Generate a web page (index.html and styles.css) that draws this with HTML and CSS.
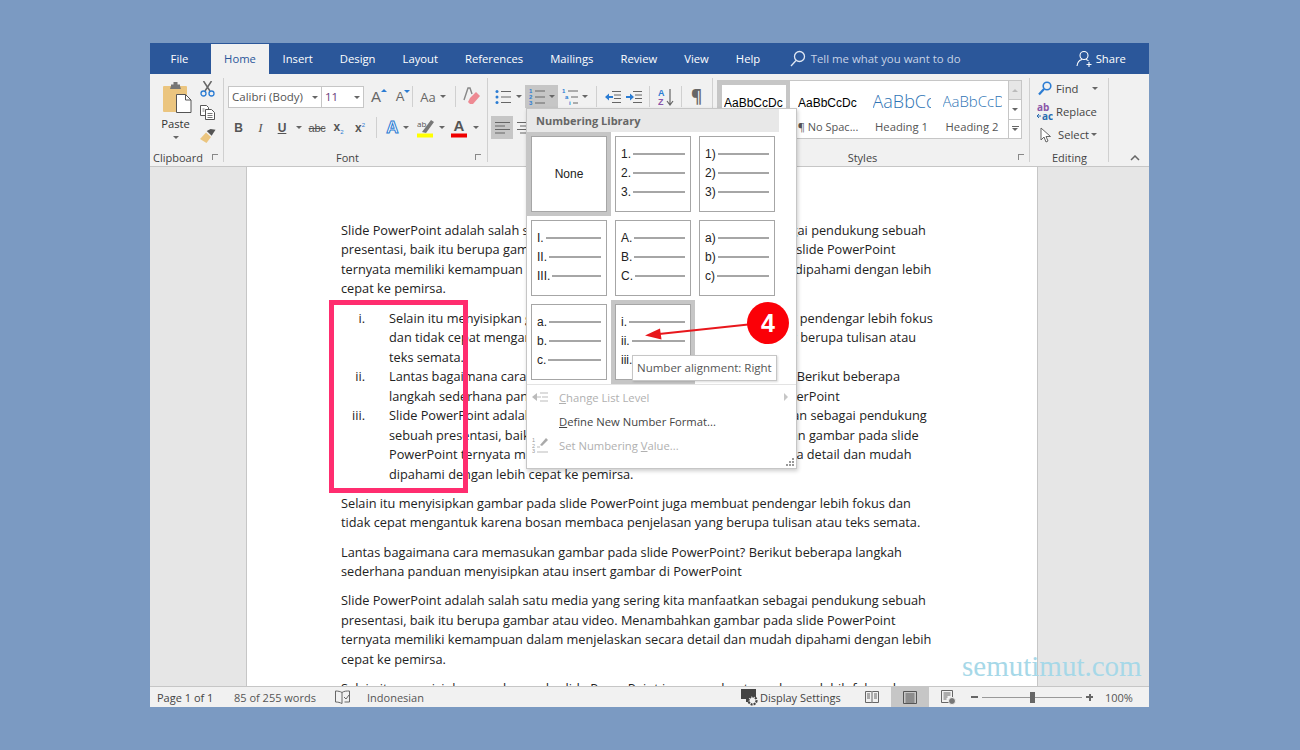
FILE: index.html
```html
<!DOCTYPE html>
<html lang="en">
<head>
  <meta charset="UTF-8">
  <title>Word - Numbering Library</title>
  <link rel="stylesheet" href="styles.css">
</head>
<body>
  <div class="window">

    <!-- Tabs -->
    <div class="tabs">
      <span class="tab tab-file">File</span>
      <span class="tab active">Home</span>
      <span class="tab">Insert</span>
      <span class="tab">Design</span>
      <span class="tab">Layout</span>
      <span class="tab">References</span>
      <span class="tab">Mailings</span>
      <span class="tab">Review</span>
      <span class="tab">View</span>
      <span class="tab">Help</span>
      <div class="tell-me">
        <svg width="16" height="18" viewBox="0 0 16 18" fill="none" stroke="#dfe7f3" stroke-width="1.3"><circle cx="9.5" cy="6.5" r="5"/><path d="M6 10.5 1 16"/></svg>
        <span>Tell me what you want to do</span>
      </div>
      <div class="share">
        <svg width="17" height="18" viewBox="0 0 17 18" fill="none" stroke="#fff" stroke-width="1.1"><circle cx="8" cy="5.5" r="4"/><path d="M1 16c.5-4 3-6 5-6.5M10 9.5c1 .3 2 .8 2.5 1.500M13 12v5M10.500 14.500h5"/></svg>
        <span>Share</span>
      </div>
    </div>

    <!-- Ribbon -->
    <div class="ribbon">

      <div class="group group-clipboard">
        <div class="group-body clip-body">
          <div class="paste">
            <svg width="29" height="31" viewBox="0 0 29 31">
              <rect x="0" y="4" width="24" height="26" rx="1" fill="#ebc57f"/>
              <path d="M8 4V2.500h2.500V0h4v2.500H17V4l1 3H7z" fill="#767676"/>
              <path d="M13.500 12.500h9l5.500 5.500v12.500H13.500z" fill="#fff" stroke="#555" stroke-width="1"/>
              <path d="M22.500 12.500v5.500H28" fill="none" stroke="#555" stroke-width="1"/>
            </svg>
            <span class="paste-label">Paste</span>
            <i class="caret"></i>
          </div>
          <div class="clip-tools">
            <svg width="15" height="16" viewBox="0 0 15 16" fill="none"><path d="M3.500 0 10 10M11.500 0 5 10" stroke="#666" stroke-width="1.500"/><circle cx="3.500" cy="12.500" r="2.500" stroke="#2b7cd3" stroke-width="1.300"/><circle cx="11.500" cy="12.500" r="2.500" stroke="#2b7cd3" stroke-width="1.300"/></svg>
            <svg width="15" height="15" viewBox="0 0 15 15" fill="#fff" stroke="#555"><path d="M.5.500h6l2 2v8H.5z"/><path d="M5.500 4.500h6l3 3v7h-9z"/><path d="M7.500 8.500h5M7.500 10.500h5M7.500 12.500h5M2.500 4h2M2.500 6h2" fill="none" stroke-width=".8"/></svg>
            <svg width="16" height="15" viewBox="0 0 16 15"><path d="M0 11 6 4.500l5 4.500-4.500 6z" fill="#ebc57f"/><path d="M6.500 3.500 10 1l5 0-3 6.500z" fill="#555" transform="rotate(8 10 5)"/></svg>
          </div>
        </div>
        <div class="group-label label-clip"><span>Clipboard</span><i class="launcher"></i></div>
      </div>

      <div class="group group-font">
        <div class="group-body font-body">
          <div class="font-row1">
            <div class="combo">Calibri (Body)<i class="caret"></i></div>
            <div class="combo combo-size">11<i class="caret"></i></div>
            <span class="a-size a-grow">A<i class="tri-up"></i></span>
            <span class="a-size a-shrink">A<i class="tri-down"></i></span>
            <i class="sep sep-left"></i>
            <span class="aa">Aa</span>
            <i class="caret"></i>
            <i class="sep"></i>
            <svg width="17" height="19" viewBox="0 0 17 19"><path d="M1 13 5 1h2l2 6" fill="none" stroke="#888" stroke-width="1.400"/><path d="M7 11 13 5l4 4-7 8H7l-2-2z" fill="#ee8a93"/></svg>
          </div>
          <div class="font-row2">
            <b class="fmt">B</b>
            <i class="fmt fmt-i">I</i>
            <u class="fmt fmt-u">U</u>
            <i class="caret"></i>
            <s class="fmt fmt-abc">abc</s>
            <span class="fmt fmt-x">x<sub>2</sub></span>
            <span class="fmt fmt-x">x<sup>2</sup></span>
            <i class="sep sep-row"></i>
            <span class="text-effect">A</span>
            <i class="caret"></i>
            <svg width="17" height="20" viewBox="0 0 17 20"><path d="M5 14 14 2l3 2-8 11z" fill="#777"/><text x="0" y="9" font-size="8" font-family="Open Sans" fill="#555">ab</text><rect y="15.500" width="16" height="4" fill="#ffff00"/></svg>
            <i class="caret"></i>
            <svg width="16" height="20" viewBox="0 0 16 20"><text x="2.500" y="13" font-size="15" font-weight="700" font-family="Liberation Sans" fill="#555">A</text><rect y="15.500" width="16" height="4" fill="#f00000"/></svg>
            <i class="caret"></i>
          </div>
        </div>
        <div class="group-label label-font"><span>Font</span><i class="launcher"></i></div>
      </div>

      <div class="group group-para">
        <div class="group-body para-body">
          <div class="para-row1">
            <svg width="16" height="16" viewBox="0 0 16 16"><g fill="#2b7cd3"><circle cx="2" cy="2.500" r="1.500"/><circle cx="2" cy="8" r="1.500"/><circle cx="2" cy="13.500" r="1.500"/></g><path d="M6 2.500h10M6 8h10M6 13.500h10" stroke="#666"/></svg>
            <i class="caret"></i>
            <div class="num-btn">
              <svg width="16" height="18" viewBox="0 0 16 18"><g fill="#2b7cd3" font-size="6" font-family="Liberation Sans" font-weight="700"><text y="5">1</text><text y="11">2</text><text y="17">3</text></g><path d="M6 3h10M6 9h10M6 15h10" stroke="#666"/></svg>
              <i class="caret"></i>
            </div>
            <svg width="16" height="18" viewBox="0 0 16 18"><g fill="#2b7cd3" font-size="6" font-family="Liberation Sans" font-weight="700"><text y="5">1</text><text x="3" y="11">a</text><text x="7" y="17">i</text></g><path d="M6 3h10M9 9h7M11 15h5" stroke="#666"/></svg>
            <i class="caret"></i>
            <i class="sep"></i>
            <svg width="16" height="14" viewBox="0 0 16 14"><path d="M7 1.500h9M9 5h7M9 8.500h7M7 12.500h9" stroke="#666"/><path d="M0 7l4-3.500V6h4v2H4v2.500z" fill="#2b7cd3"/></svg>
            <svg width="16" height="14" viewBox="0 0 16 14"><path d="M7 1.500h9M9 5h7M9 8.500h7M7 12.500h9" stroke="#666"/><path d="M8 7 4 3.500V6H0v2h4v2.500z" fill="#2b7cd3"/></svg>
            <i class="sep"></i>
            <svg width="16" height="18" viewBox="0 0 16 18"><text y="8" font-size="9" font-weight="700" font-family="Liberation Sans" fill="#2b7cd3">A</text><text y="17" font-size="9" font-weight="700" font-family="Liberation Sans" fill="#8a55a8">Z</text><path d="M12 1v15M9 13l3 4 3-4" fill="none" stroke="#666" stroke-width="1.200"/></svg>
            <i class="sep"></i>
            <span class="pilcrow">¶</span>
          </div>
          <div class="para-row2">
            <div class="align-btn"><svg width="15" height="12" viewBox="0 0 15 12"><path d="M0 .5h15M0 4h10M0 7.500h15M0 11h10" stroke="#666"/></svg></div>
            <svg width="13" height="12" viewBox="0 0 13 12"><path d="M0 .5h13M3 4h10M0 7.500h13M3 11h10" stroke="#666"/></svg>
          </div>
        </div>
      </div>

      <div class="group group-styles">
        <div class="group-body styles-body">
          <div class="gallery">
            <div class="style-item style-current"><span class="sample">AaBbCcDc</span></div>
            <div class="style-item style-nospace"><span class="sample">AaBbCcDc</span><span class="style-name">¶ No Spac...</span></div>
            <div class="style-item style-h1"><span class="sample">AaBbCc</span><span class="style-name">Heading 1</span></div>
            <div class="style-item style-h2"><span class="sample">AaBbCcD</span><span class="style-name">Heading 2</span></div>
          </div>
          <div class="gallery-scroll">
            <div class="scroll-btn scroll-up"><i class="tri-up tri-grey"></i></div>
            <div class="scroll-btn scroll-down"><i class="caret"></i></div>
            <div class="scroll-btn scroll-more"><i class="more-bar"></i><i class="caret"></i></div>
          </div>
        </div>
        <div class="group-label label-styles"><span>Styles</span><i class="launcher"></i></div>
      </div>

      <div class="group group-edit">
        <div class="group-body edit-body">
          <div class="edit-row">
            <svg width="14" height="15" viewBox="0 0 14 15" fill="none"><circle cx="9" cy="5" r="3.800" stroke="#2b7cd3" stroke-width="1.600"/><path d="M6 8 1 13.500" stroke="#2b7cd3" stroke-width="2.200"/></svg>
            <span>Find</span><i class="caret caret-find"></i>
          </div>
          <div class="edit-row">
            <svg class="replace-icon" width="16" height="18" viewBox="0 0 16 18"><text x="0" y="8" font-size="10" font-weight="700" font-family="Open Sans" fill="#8a55a8">ab</text><text x="5" y="17" font-size="10" font-weight="700" font-family="Open Sans" fill="#2b6cb0">ac</text><path d="M0 13h4M0 13l2-2M0 13l2 2" stroke="#2b6cb0" fill="none"/></svg>
            <span class="replace-text">Replace</span>
          </div>
          <div class="edit-row">
            <svg class="select-icon" width="12" height="16" viewBox="0 0 12 16"><path d="M1 1v12l3-3 2 5 2-1-2-4.500h4.500z" fill="#fff" stroke="#666"/></svg>
            <span>Select</span><i class="caret caret-select"></i>
          </div>
        </div>
        <div class="group-label label-edit"><span>Editing</span></div>
      </div>

      <svg class="collapse" width="10" height="6" viewBox="0 0 10 6" fill="none"><path d="M1 5 5 1l4 4" stroke="#666" stroke-width="1.500"/></svg>
    </div>

    <!-- Document -->
    <div class="doc-area">
      <div class="page">
        <p>Slide PowerPoint adalah salah satu media yang sering kita manfaatkan sebagai pendukung sebuah<br>presentasi, baik itu berupa gambar atau video. Menambahkan gambar pada slide PowerPoint<br>ternyata memiliki kemampuan dalam menjelaskan secara detail dan mudah dipahami dengan lebih<br>cepat ke pemirsa.</p>
        <div class="list">
          <div class="list-item"><span class="marker">i.</span><span>Selain itu menyisipkan gambar pada slide PowerPoint juga membuat pendengar lebih fokus<br>dan tidak cepat mengantuk karena bosan membaca penjelasan yang berupa tulisan atau<br>teks semata.</span></div>
          <div class="list-item"><span class="marker">ii.</span><span>Lantas bagaimana cara memasukan gambar pada slide PowerPoint? Berikut beberapa<br>langkah sederhana panduan menyisipkan atau insert gambar di PowerPoint</span></div>
          <div class="list-item"><span class="marker">iii.</span><span>Slide PowerPoint adalah salah satu media yang sering kita manfaatkan sebagai pendukung<br>sebuah presentasi, baik itu berupa gambar atau video. Menambahkan gambar pada slide<br>PowerPoint ternyata memiliki kemampuan dalam menjelaskan secara detail dan mudah<br>dipahami dengan lebih cepat ke pemirsa.</span></div>
        </div>
        <p>Selain itu menyisipkan gambar pada slide PowerPoint juga membuat pendengar lebih fokus dan<br>tidak cepat mengantuk karena bosan membaca penjelasan yang berupa tulisan atau teks semata.</p>
        <p>Lantas bagaimana cara memasukan gambar pada slide PowerPoint? Berikut beberapa langkah<br>sederhana panduan menyisipkan atau insert gambar di PowerPoint</p>
        <p>Slide PowerPoint adalah salah satu media yang sering kita manfaatkan sebagai pendukung sebuah<br>presentasi, baik itu berupa gambar atau video. Menambahkan gambar pada slide PowerPoint<br>ternyata memiliki kemampuan dalam menjelaskan secara detail dan mudah dipahami dengan lebih<br>cepat ke pemirsa.</p>
        <p>Selain itu menyisipkan gambar pada slide PowerPoint juga membuat pendengar lebih fokus dan</p>
      </div>
    </div>

    <!-- Status bar -->
    <div class="status">
      <span class="st-page">Page 1 of 1</span>
      <span class="st-words">85 of 255 words</span>
      <span class="st-proof"><svg width="15" height="15" viewBox="0 0 15 15" fill="none" stroke="#666"><path d="M7 2.500C5.500 1.500 3 1 .5 1v11c2.500 0 4.500.5 6.500 1.500V2.500zM7 2.500C9 1 11.500 1 14.500 1v11h-5"/><path d="m9 7 2 2 3-4" stroke-width="1"/></svg></span>
      <span class="st-lang">Indonesian</span>
      <span class="st-display">
        <svg width="17" height="17" viewBox="0 0 17 17"><rect width="15" height="10" fill="#444"/><rect x="5" y="10" width="5" height="3" fill="#444"/><circle cx="11.500" cy="11.500" r="4" fill="#f1f1f1" stroke="#444" stroke-width="2.200" stroke-dasharray="2 1"/></svg>
        Display Settings
      </span>
      <span class="st-view st-read"><svg width="14" height="13" viewBox="0 0 14 13" fill="none" stroke="#666"><path d="M.5.500h6l.5.500.5-.500h6v11h-6l-.5.500-.5-.500h-6zM7 1v11M2 3h3M2 5h3M2 7h3M9 3h3M9 5h3M9 7h3"/></svg></span>
      <span class="st-view st-print"><svg width="14" height="13" viewBox="0 0 14 13" fill="none" stroke="#555"><path d="M.5.500h13v12H.5zM2.500 3h9M2.500 5h9M2.500 7h9M2.500 9h9M2.500 11h9" stroke-width="1"/></svg></span>
      <span class="st-view st-web"><svg width="15" height="15" viewBox="0 0 15 15" fill="none" stroke="#666"><path d="M8 12.500H.5V.500h11V7M2.500 3h7M2.500 5h7M2.500 7h4M2.500 9h3"/><circle cx="11" cy="11" r="3.500" fill="#777" stroke="#f1f1f1"/></svg></span>
      <span class="zoom-btn zoom-minus"></span>
      <div class="slider"><i class="thumb"></i></div>
      <span class="zoom-btn zoom-plus"></span>
      <span class="st-pct">100%</span>
    </div>

    <!-- Numbering dropdown -->
    <div class="dropdown">
      <div class="dd-header">Numbering Library</div>
      <div class="tiles">
        <div class="tile tile-none selected">None</div>
        <div class="tile"><div><span>1.</span><i></i></div><div><span>2.</span><i></i></div><div><span>3.</span><i></i></div></div>
        <div class="tile"><div><span>1)</span><i></i></div><div><span>2)</span><i></i></div><div><span>3)</span><i></i></div></div>
        <div class="tile"><div><span>I.</span><i></i></div><div><span>II.</span><i></i></div><div><span>III.</span><i></i></div></div>
        <div class="tile"><div><span>A.</span><i></i></div><div><span>B.</span><i></i></div><div><span>C.</span><i></i></div></div>
        <div class="tile"><div><span>a)</span><i></i></div><div><span>b)</span><i></i></div><div><span>c)</span><i></i></div></div>
        <div class="tile"><div><span>a.</span><i></i></div><div><span>b.</span><i></i></div><div><span>c.</span><i></i></div></div>
        <div class="tile selected"><div><span>i.</span><i></i></div><div><span>ii.</span><i></i></div><div><span>iii.</span><i></i></div></div>
      </div>
      <div class="dd-menu">
        <div class="dd-item disabled">
          <svg width="16" height="10" viewBox="0 0 16 10"><path d="M0 5l5-4v8z" fill="#bbb"/><path d="M4 5h5M8 1h8M10 5h6M8 9h8" stroke="#bbb"/></svg>
          <span><u>C</u>hange List Level</span><i class="sub-arrow"></i>
        </div>
        <div class="dd-item"><span class="no-icon"><u>D</u>efine New Number Format...</span></div>
        <div class="dd-item disabled">
          <svg width="16" height="16" viewBox="0 0 16 16"><g fill="#999" font-size="5.500" font-family="Liberation Sans"><text y="5">1</text><text y="10.500">2</text><text y="16">3</text></g><path d="M5 15h11M5 10h3" stroke="#bbb"/><path d="m8 8 6-7 2 2-6 6z" fill="#aaa"/></svg>
          <span>Set Numbering <u>V</u>alue...</span>
        </div>
      </div>
      <svg class="grip" width="8" height="8" viewBox="0 0 8 8" fill="#999"><rect x="6" y="0" width="2" height="2"/><rect x="3" y="3" width="2" height="2"/><rect x="6" y="3" width="2" height="2"/><rect x="0" y="6" width="2" height="2"/><rect x="3" y="6" width="2" height="2"/><rect x="6" y="6" width="2" height="2"/></svg>
    </div>

    <!-- Annotations on top of the screenshot -->
    <div class="highlight-box"></div>
    <div class="tooltip">Number alignment: Right</div>
    <svg class="arrow" width="110" height="24" viewBox="0 0 110 24"><path d="M108 5 14 15" stroke="#e8171c" stroke-width="2"/><path d="M0 16.500 15 9.500l1.500 11z" fill="#e8171c"/></svg>
    <div class="step-badge">4</div>
    <div class="watermark">semutimut.com</div>
  </div>
</body>
</html>
```

FILE: styles.css
```css
* {
  box-sizing: border-box;
}

html, body {
  margin: 0;
  height: 750px;
  overflow: hidden;
}

body {
  background-color: #7b9ac2;
  padding: 43px 0 0 150px;
  font-family: "Open Sans", "Noto Sans", sans-serif;
  font-size: 11.25px;
  color: #444;
}

.window {
  position: relative;
  width: 999px;
  height: 664px;
  display: flex;
  flex-direction: column;
  overflow: hidden;
}

/* Tabs */
.tabs {
  display: flex;
  height: 31px;
  flex: none;
  background-color: #2b579a;
  color: #fff;
  line-height: 32px;
}

.tab {
  padding: 0 13.5px;
  white-space: nowrap;
}

.tab-file {
  width: 59px;
  padding: 0;
  text-align: center;
  margin-right: 2px;
}

.tab.active {
  background-color: #f1f1f1;
  color: #2b579a;
  margin-top: 1px;
  line-height: 30px;
  width: 58px;
  padding: 0;
  text-align: center;
}

.tell-me {
  display: flex;
  align-items: center;
  margin-left: 16px;
  color: #c7d3e6;
  gap: 5px;
  width: 286px;
  font-size: 11.4px;
  white-space: nowrap;
}

.share {
  display: flex;
  align-items: center;
  gap: 3px;
}

/* Ribbon */
.ribbon {
  position: relative;
  display: flex;
  height: 93px;
  flex: none;
  background-color: #f1f1f1;
  border-bottom: 1px solid #c6c6c6;
}

.group {
  position: relative;
  height: 92px;
  display: flex;
  flex-direction: column;
}

.group::after {
  content: "";
  position: absolute;
  right: 0;
  top: 4px;
  height: 84px;
  width: 1px;
  background-color: #d0d0d0;
}

.group-clipboard { width: 74px; }
.group-font { width: 264px; }
.group-para { width: 225px; }
.group-styles { width: 317px; }
.group-edit { width: 79px; }

.group-body {
  flex: 1;
}

.group-label {
  height: 17px;
  flex: none;
  display: flex;
  align-items: center;
  line-height: 16px;
  font-size: 11px;
  position: relative;
}

.launcher {
  position: absolute;
  width: 6px;
  height: 6px;
  border: 1px solid #888;
  border-width: 1px 0 0 1px;
  top: 5px;
}

.label-clip { padding-left: 3px; }
.label-clip .launcher { left: 62px; }
.label-font { justify-content: center; padding-right: 17px; }
.label-font .launcher { right: 7px; }
.label-styles { justify-content: center; padding-right: 18px; }
.label-styles .launcher { right: 6px; }
.label-edit { justify-content: center; }

.caret {
  display: inline-block;
  width: 0;
  height: 0;
  flex: none;
  border-left: 3.5px solid transparent;
  border-right: 3.5px solid transparent;
  border-top: 3.5px solid #666;
  justify-self: center;
  align-self: center;
}

.sep {
  width: 1px;
  height: 21px;
  background-color: #d0d0d0;
  justify-self: center;
}

.sep-left {
  justify-self: start;
}

/* Clipboard */
.clip-body {
  position: relative;
  display: flex;
  padding: 8px 0 0 13px;
}

.paste {
  width: 25px;
  display: flex;
  flex-direction: column;
  align-items: center;
  color: #333;
}

.paste svg {
  flex: none;
  margin-left: 4px;
}

.paste-label {
  margin-top: 2px;
  line-height: 18px;
}

.paste .caret {
  margin-top: 3px;
}

.clip-tools {
  display: flex;
  flex-direction: column;
  gap: 8px;
  margin-left: 12px;
  margin-top: -1px;
}

/* Font */
.font-body {
  padding: 11px 0 0 4px;
}

.font-row1, .font-row2, .para-row1, .para-row2 {
  display: grid;
  align-items: center;
  justify-items: center;
  height: 23px;
}

.font-row1 {
  grid-template-columns: 94px 42px 24px 24px 6px 20px 10px 15px 17px;
}

.font-row2 {
  margin-top: 8px;
  grid-template-columns: 21px 23px 20px 14px 22px 21px 22px 14px 15px 12px 26px 7px 28px 5px;
}

.combo {
  width: 100%;
  height: 22px;
  background-color: #fff;
  border: 1px solid #c6c6c6;
  font-size: 11.5px;
  line-height: 20px;
  padding-left: 3px;
  color: #555;
  position: relative;
  white-space: nowrap;
}

.combo-size {
  border-left: 0;
  margin-left: 0;
  color: #6a3a7a;
}

.combo .caret {
  position: absolute;
  right: 3px;
  top: 9px;
}

.a-size {
  position: relative;
  font-family: "Liberation Sans", sans-serif;
  color: #666;
}

.a-grow { font-size: 15px; }
.a-shrink { font-size: 13px; }

.tri-up, .tri-down {
  position: absolute;
  top: 1px;
  left: 100%;
  width: 0;
  height: 0;
  border-left: 3px solid transparent;
  border-right: 3px solid transparent;
}

.tri-up { border-bottom: 3px solid #2b7cd3; }
.tri-down { border-top: 3px solid #2b7cd3; }

.aa {
  font-size: 13px;
  color: #666;
}

.fmt {
  font-family: "Liberation Sans", sans-serif;
  font-size: 12px;
  color: #555;
  font-style: normal;
}

.fmt-i {
  font-style: italic;
  font-family: "Liberation Serif", serif;
  font-size: 13px;
}

.fmt-u {
  font-weight: 700;
}

.fmt-abc {
  font-size: 11px;
  letter-spacing: -.3px;
}

.fmt-x {
  font-weight: 700;
  font-size: 12px;
}

.fmt-x sub, .fmt-x sup {
  font-size: 6px;
  font-weight: 400;
  color: #2b7cd3;
}

.sep-row {
  justify-self: start;
  margin-left: 5px;
}

.text-effect {
  font-family: "Liberation Sans", sans-serif;
  font-size: 17px;
  font-weight: 700;
  color: #fff;
  -webkit-text-stroke: 1px #2b7cd3;
}

/* Paragraph */
.para-body {
  padding: 11px 0 0 3px;
}

.para-row1 {
  grid-template-columns: 23px 9px 2px 33px 23px 7px 16px 17px 26px 4px 29px 2px 29px;
}

.para-row1 .num-btn {
  grid-column: 4;
}

.num-btn {
  width: 33px;
  height: 23px;
  background-color: #c6c6c6;
  display: flex;
  align-items: center;
  padding-left: 4px;
  gap: 4px;
}

.pilcrow {
  font-size: 17px;
  font-weight: 700;
  color: #666;
  line-height: 20px;
}

.para-row2 {
  margin-top: 8px;
  grid-template-columns: 22px 20px;
}

.align-btn {
  width: 22px;
  height: 23px;
  background-color: #c6c6c6;
  display: flex;
  align-items: center;
  justify-content: center;
}

/* Styles */
.styles-body {
  display: flex;
  padding: 6px 0 0 4px;
}

.gallery {
  display: flex;
  width: 291px;
  height: 59px;
  background-color: #fff;
  border: 1px solid #c6c6c6;
  border-right: 0;
}

.style-item {
  display: flex;
  flex-direction: column;
  align-items: center;
  overflow: hidden;
  height: 57px;
  font-family: "Liberation Sans", sans-serif;
  color: #000;
  white-space: nowrap;
}

.style-current {
  width: 72px;
  border: 4px solid #c6c6c6;
  border-bottom: 0;
  padding-top: 9px;
  height: 57px;
}

.style-nospace { width: 76px; padding-top: 13px; }
.style-h1 { width: 71px; padding-top: 9px; }
.style-h2 { width: 70px; padding-top: 9px; }

.sample {
  font-size: 12px;
  line-height: 18px;
  width: 60px;
  overflow: hidden;
}

.style-h1 .sample, .style-h2 .sample {
  color: #2e74b5;
  font-family: "Open Sans", sans-serif;
  font-weight: 300;
}

.style-h1 .sample {
  font-size: 18px;
  line-height: 22px;
  width: 58px;
}

.style-h2 .sample {
  font-size: 15px;
  line-height: 22px;
  width: 59px;
}

.style-name {
  font-family: "Open Sans", sans-serif;
  font-size: 11.25px;
  color: #555;
  line-height: 16px;
  margin-top: 7px;
}

.style-nospace .style-name {
  font-size: 11px;
}

.gallery-scroll {
  width: 14px;
  height: 59px;
  border: 1px solid #c6c6c6;
  display: flex;
  flex-direction: column;
}

.scroll-btn {
  flex: 1;
  display: flex;
  flex-direction: column;
  align-items: center;
  justify-content: center;
  background-color: #fff;
  border-bottom: 1px solid #c6c6c6;
  gap: 1px;
}

.scroll-up {
  background-color: #e6e6e6;
}

.scroll-more {
  border-bottom: 0;
}

.tri-grey {
  position: static;
  border-bottom-color: #bbb;
}

.more-bar {
  width: 7px;
  height: 1px;
  background-color: #666;
}

/* Editing */
.edit-body {
  display: flex;
  flex-direction: column;
  padding: 3px 0 0 8px;
}

.edit-row {
  display: flex;
  align-items: center;
  height: 23px;
  gap: 4px;
  color: #444;
}

.caret-find { margin-left: 10px; }
.caret-select { margin-left: -2px; }
.replace-icon { margin-left: -1px; margin-right: -1px; }
.select-icon { margin-left: 2px; margin-right: 2px; }

.collapse {
  position: absolute;
  left: 980px;
  top: 81px;
}

/* Document */
.doc-area {
  flex: 1;
  min-height: 0;
  background-color: #e6e6e6;
  padding: 0 111px 0 96px;
  overflow: hidden;
}

.page {
  width: 792px;
  height: 100%;
  background-color: #fff;
  padding: 53.8px 0 0 94px;
  font-size: 12.75px;
  line-height: 19.5px;
  color: #222;
  white-space: nowrap;
  overflow: hidden;
  border-left: 1px solid #c6c6c6;
  border-right: 1px solid #c6c6c6;
}

.page p {
  margin: 0 0 9.8px;
}

.list {
  margin-bottom: 9.8px;
}

.list-item {
  display: grid;
  grid-template-columns: 24px 1fr;
  column-gap: 24px;
}

.marker {
  text-align: right;
}

/* Status bar */
.status {
  display: flex;
  align-items: center;
  height: 21px;
  flex: none;
  background-color: #f1f1f1;
  border-top: 1px solid #c6c6c6;
  font-size: 11px;
  color: #555;
  white-space: nowrap;
}

.status span {
  display: flex;
  align-items: center;
  height: 100%;
}

.st-page { width: 84px; padding-left: 7px; color: #444; }
.st-words { width: 101px; }
.st-proof { width: 32px; }
.st-lang { width: 374px; }
.st-display { width: 124px; gap: 2px; color: #444; }
.st-view { width: 38px; justify-content: center; }
.st-read { width: 26px; justify-content: flex-start; }
.st-print { background-color: #c6c6c6; }
.st-pct { margin-left: 8px; }

.zoom-btn {
  position: relative;
  width: 15px;
}

.zoom-minus::after, .zoom-plus::after, .zoom-plus::before {
  content: "";
  position: absolute;
  background-color: #666;
  left: 4px;
  top: 9px;
  width: 7px;
  height: 2px;
}

.zoom-plus::before {
  left: 6.500px;
  top: 6.500px;
  width: 2px;
  height: 7px;
}

.slider {
  position: relative;
  width: 100px;
  height: 1px;
  background-color: #999;
}

.thumb {
  position: absolute;
  left: 48px;
  top: -5px;
  width: 5px;
  height: 11px;
  background-color: #666;
}

/* Dropdown */
.dropdown {
  position: absolute;
  left: 376px;
  top: 65px;
  width: 271px;
  height: 361px;
  background-color: #fff;
  border: 1px solid #c6c6c6;
  box-shadow: 1px 2px 4px rgba(0, 0, 0, 0.2);
}

.dd-header {
  width: 252px;
  height: 23px;
  background-color: #e8e8e8;
  font-weight: 700;
  font-size: 11px;
  color: #666;
  line-height: 23px;
  padding-left: 9px;
}

.tiles {
  display: grid;
  grid-template-columns: repeat(3, 76px);
  grid-auto-rows: 76px;
  gap: 8px;
  padding: 4px;
}

.tile {
  border: 1px solid #a6a6a6;
  padding: 7px 5px 0;
  font-family: "Liberation Sans", sans-serif;
  font-size: 12px;
  color: #222;
}

.tile div {
  display: flex;
  align-items: center;
  height: 19px;
  gap: 2px;
}

.tile div i {
  flex: 1;
  height: 2px;
  background-color: #a6a6a6;
}

.tile.selected {
  box-shadow: 0 0 0 4px #c6c6c6;
}

.tile-none {
  display: flex;
  align-items: center;
  justify-content: center;
  padding: 0;
}

.dd-menu {
  border-top: 1px solid #e3e3e3;
}

.dd-item {
  position: relative;
  display: flex;
  align-items: center;
  height: 24px;
  padding-left: 5px;
  gap: 11px;
  color: #444;
}

.dd-item.disabled {
  color: #b0b0b0;
}

.no-icon {
  margin-left: 27px;
}

.sub-arrow {
  position: absolute;
  left: 257px;
  top: 8px;
  width: 0;
  height: 0;
  border-top: 4px solid transparent;
  border-bottom: 4px solid transparent;
  border-left: 4px solid #c6c6c6;
}

.grip {
  position: absolute;
  right: 2px;
  bottom: 2px;
}

/* Annotations */
.highlight-box {
  position: absolute;
  left: 179px;
  top: 257px;
  width: 139px;
  height: 193px;
  border: 5px solid #ff2d6f;
}

.tooltip {
  position: absolute;
  left: 482px;
  top: 312px;
  width: 145px;
  height: 26px;
  background-color: #fff;
  border: 1px solid #c6c6c6;
  box-shadow: 1px 1px 2px rgba(0, 0, 0, 0.15);
  font-size: 11.5px;
  line-height: 24px;
  padding-left: 4px;
  color: #555;
  white-space: nowrap;
}

.arrow {
  position: absolute;
  left: 495px;
  top: 276px;
}

.step-badge {
  position: absolute;
  left: 597px;
  top: 259px;
  width: 42px;
  height: 42px;
  border-radius: 50%;
  background-color: #fb0007;
  color: #fff;
  font-family: "Liberation Sans", sans-serif;
  font-size: 25px;
  font-weight: 700;
  line-height: 42px;
  text-align: center;
}

.watermark {
  position: absolute;
  left: 812px;
  top: 606px;
  font-family: "Liberation Serif", serif;
  font-size: 29px;
  line-height: 34px;
  color: #a6d8e8;
  white-space: nowrap;
}
```
